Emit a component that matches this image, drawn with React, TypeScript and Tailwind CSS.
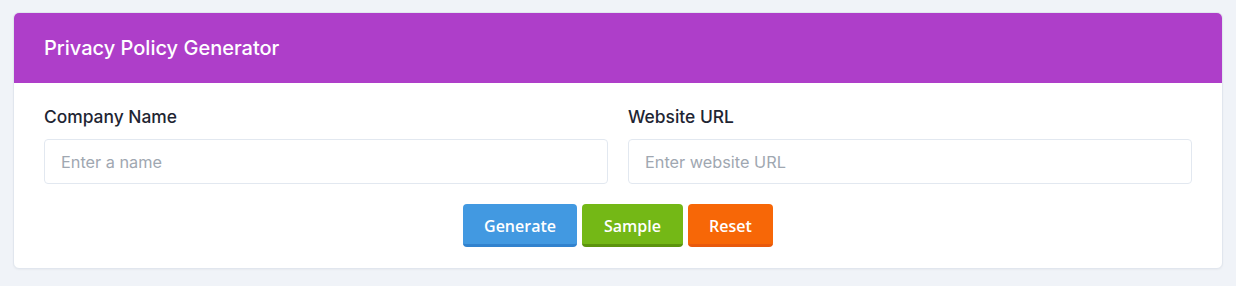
export default function App() {
  return (
    <div className="min-h-[286px] bg-[#f0f3f8] px-[13px] pt-[12px] pb-[13px] font-['Inter',sans-serif]">
      <div className="overflow-hidden rounded-md border border-[#e1e6ee] bg-white shadow-[0_1px_2px_rgba(0,0,0,0.04)]">
        <div className="flex h-[70px] items-center bg-[#ae3ec9] px-[30px]">
          <h1 className="text-[20px] font-medium text-white">Privacy Policy Generator</h1>
        </div>

        <div className="px-[30px] pt-[22px] pb-[21px]">
          <div className="grid grid-cols-2 gap-5">
            <div>
              <label className="block text-[17.4px] leading-6 font-medium text-[#1e2533]">Company Name</label>
              <input
                type="text"
                placeholder="Enter a name"
                className="mt-[10px] h-[45px] w-full rounded border border-[#e2e8f0] px-4 text-[16.3px] placeholder:text-[#a0a7b1] focus:outline-none"
              />
            </div>
            <div>
              <label className="block text-[17.4px] leading-6 font-medium text-[#1e2533]">Website URL</label>
              <input
                type="text"
                placeholder="Enter website URL"
                className="mt-[10px] h-[45px] w-full rounded border border-[#e2e8f0] px-4 text-[16.3px] placeholder:text-[#a0a7b1] focus:outline-none"
              />
            </div>
          </div>

          <div className="mt-5 flex justify-center gap-[5px] font-['Open_Sans',sans-serif]">
            <button className="h-[43px] w-[114px] rounded border-b-[3px] border-[#3182ce] bg-[#4299e1] pt-[3px] text-[16px] font-semibold text-white">
              Generate
            </button>
            <button className="h-[43px] w-[101px] rounded border-b-[3px] border-[#5c940d] bg-[#74b816] pt-[3px] text-[16px] font-semibold text-white">
              Sample
            </button>
            <button className="h-[43px] w-[85px] rounded border-b-[3px] border-[#e8590c] bg-[#f76707] pt-[3px] text-[16px] font-semibold text-white">
              Reset
            </button>
          </div>
        </div>
      </div>
    </div>
  );
}
